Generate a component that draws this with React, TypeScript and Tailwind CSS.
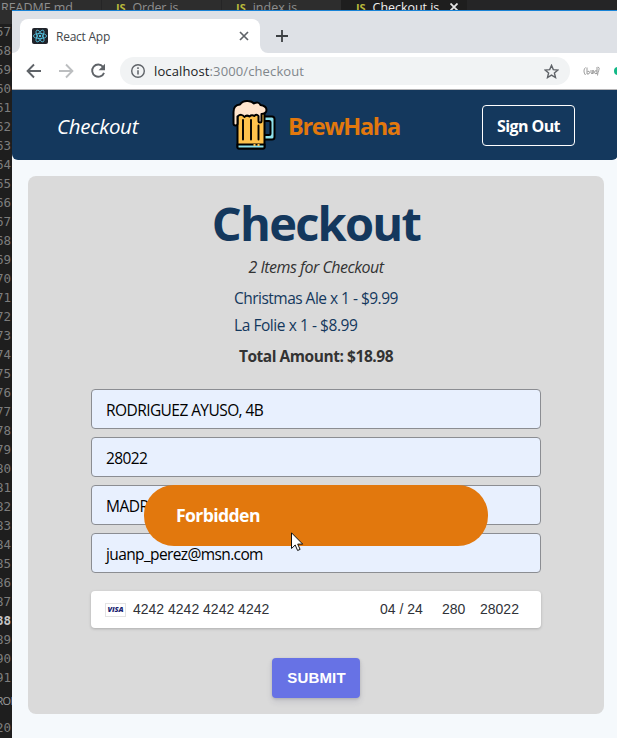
import type { ReactNode } from "react";

const lineNumbers = Array.from({ length: 35 }, (_, i) => 57 + i);

function JsMark() {
  return <span className="mr-[7px] font-['Open_Sans',sans-serif] text-[11px] font-bold text-[#b7b73b]">JS</span>;
}

function EditorTabs() {
  return (
    <div className="flex h-[10px] shrink-0 overflow-hidden bg-[#252526] text-[12.5px] leading-[15px] text-[#8f8f8f]">
      <div className="w-[101px] shrink-0 bg-[#2d2d2d] pl-px whitespace-nowrap tracking-[-0.05px]">README.md</div>
      <div className="w-[120px] shrink-0 border-l border-[#252526] bg-[#2d2d2d] pl-[14px] whitespace-nowrap tracking-[-0.15px]"><JsMark />Order.js</div>
      <div className="w-[120px] shrink-0 border-l border-[#252526] bg-[#2d2d2d] pl-[14px] whitespace-nowrap"><JsMark />index.js</div>
      <div className="flex w-[126px] shrink-0 bg-[#1e1e1e] pl-[15px] whitespace-nowrap text-[#f0f0f0]">
        <div className="w-[94px] tracking-[-0.05px]"><JsMark />Checkout.js</div>
        <svg className="mt-[3px] h-2 w-2" viewBox="0 0 8 8" stroke="#e4e4e4" strokeWidth="1.8"><path d="M.5.5l7 7M7.500.5l-7 7" /></svg>
      </div>
    </div>
  );
}

function Gutter() {
  return (
    <div className="flex w-3 shrink-0 flex-col items-end overflow-hidden border-t-[14px] border-[#2d2d2d] bg-[#1e1e1e] pr-px font-['DejaVu_Sans_Mono',monospace] text-[12.5px] leading-[19px] text-[#7d7d7d]">
      <div className="-mt-[2px]">
        {lineNumbers.map((n) => (
          <div key={n} className={n === 88 ? "font-bold text-[#c6c6c6]" : ""}>{n}</div>
        ))}
      </div>
      <div className="mt-[5px] -mr-[2px] font-['Open_Sans',sans-serif] text-[11px] leading-[18px] tracking-[-0.6px] text-[#9a9a9a]">ROI</div>
      <div className="mt-[8px]">20</div>
    </div>
  );
}

function ReactMark() {
  return (
    <svg className="h-4 w-4 rounded-[2px] bg-[#20232a]" viewBox="0 0 16 16" fill="none" stroke="#53c1de" strokeWidth=".85">
      <ellipse cx="8" cy="8" rx="6.6" ry="2.600" />
      <ellipse cx="8" cy="8" rx="6.600" ry="2.6" transform="rotate(60 8 8)" />
      <ellipse cx="8" cy="8" rx="6.6" ry="2.6" transform="rotate(120 8 8)" />
      <circle cx="8" cy="8" r="1.2" fill="#53c1de" stroke="none" />
    </svg>
  );
}

function TabStrip() {
  return (
    <div className="flex h-[42px] shrink-0 items-end bg-[#dee1e6]">
      <svg className="h-2 w-2" viewBox="0 0 8 8"><path d="M8 0v8H0a8 8 0 0 0 8-8z" fill="#fff" /></svg>
      <div className="flex h-[34px] w-[240px] items-center rounded-t-lg bg-white pr-[11px] pl-3 text-[12px] text-[#45494d]">
        <ReactMark />
        <span className="ml-2 flex-1 pt-px tracking-[-0.25px]">React App</span>
        <svg className="h-[10px] w-[10px]" viewBox="0 0 10 10" stroke="#5f6368" strokeWidth="1.7"><path d="M1 1l8 8M9 1l-8 8" /></svg>
      </div>
      <svg className="h-2 w-2" viewBox="0 0 8 8"><path d="M0 0v8h8a8 8 0 0 1-8-8z" fill="#fff" /></svg>
      <svg className="mb-[11px] ml-2 h-3 w-3" viewBox="0 0 12 12" stroke="#3c4043" strokeWidth="1.8"><path d="M6 0v12M0 6h12" /></svg>
    </div>
  );
}

function Toolbar() {
  return (
    <div className="flex h-[37px] shrink-0 items-center border-b border-[#b5b4b6] bg-white">
      <svg className="ml-[14px] h-4 w-4 shrink-0" viewBox="0 0 16 16" fill="none" stroke="#5f6368" strokeWidth="1.9"><path d="M15 8H2.200M8 1.500L1.600 8 8 14.500" /></svg>
      <svg className="ml-4 h-4 w-4 shrink-0" viewBox="0 0 16 16" fill="none" stroke="#bcbec0" strokeWidth="1.9"><path d="M1 8h12.800M8 1.500L14.400 8 8 14.500" /></svg>
      <svg className="ml-4 h-4 w-4 shrink-0" viewBox="0 0 16 16"><path d="M13 3.800A6.100 6.100 0 1 0 14 9.800" fill="none" stroke="#5f6368" strokeWidth="1.9" /><path d="M15 .8v6.400H8.600z" fill="#5f6368" /></svg>
      <div className="ml-[14px] flex h-7 w-[450px] shrink-0 items-center rounded-full bg-[#f1f3f4] pr-[11px] pl-[11px]">
        <svg className="h-[14px] w-[14px]" viewBox="0 0 14 14"><circle cx="7" cy="7" r="6.300" fill="none" stroke="#5f6368" strokeWidth="1.400" /><path d="M7 6.200v4.400M7 3.300v1.600" stroke="#5f6368" strokeWidth="1.500" /></svg>
        <span className="ml-[9px] flex-1 pt-px text-[13px] tracking-[0.12px] text-[#80868b]"><span className="text-[#202124]">localhost</span>:3000/checkout</span>
        <svg className="h-[15px] w-[15px]" viewBox="0 0 15 15" fill="none" stroke="#5f6368" strokeWidth="1.400"><path d="M7.500 1.400l1.800 4.200 4.600.4-3.500 3 1.100 4.500-4-2.400-4 2.400 1.100-4.500-3.500-3 4.600-.4z" /></svg>
      </div>
      <svg className="ml-[13px] h-[10px] w-[17px] shrink-0" viewBox="0 0 17 10" fill="none" stroke="#8f8f8f" strokeWidth=".9">
        <path d="M2.500 1.500C.5 3.500.5 6.500 2.500 9M4 1.500V8q2.500.5 2.500-1.500T4.500 5.500M8 4v3q1 1.500 2 0V4v4M14 1v6.500M14 5q-2.500-1-2.500 1.200T14 7.500M15 .8q2 1 .8 3.500T14.500 9.500" />
      </svg>
      <div className="ml-[14px] h-2 w-2 shrink-0 rounded-full bg-[#12b886]" />
    </div>
  );
}

function BeerMug() {
  return (
    <svg className="h-[52px] w-[44px]" viewBox="0 0 44 52" stroke="#000" strokeWidth="2" strokeLinejoin="round" strokeLinecap="round">
      <path d="M32 17.500h8q2.500 0 2.500 2.500v18q0 2.500-2.500 2.500h-8v-4.500h5q1.500 0 1.500-1.500v-11q0-1.500-1.500-1.500h-5z" fill="#8ce0eb" />
      <path d="M5.500 12h27v36q0 1.500-1.500 1.500h-24Q5.500 49.500 5.500 48z" fill="#ffc24c" />
      <path d="M5.500 45.500h27v2.500q0 1.500-1.500 1.500H7Q5.500 49.500 5.500 48z" fill="#8ce0eb" />
      <path d="M5.500 24.500q0 2-2 2t-2-2v-11.500Q1.500 6 8 5.500 10.500 1.500 16 2q4 .2 6 2.500Q26.500 2 28.500 6q6 1 6 5 0 3.500-5 4v7q0 1.500-1.500 1.500T26.500 22v-5q-2-2.500-4 0-3-1.500-5 .5-3-2-5 .5-3-4-7-.5z" fill="#ffe4cc" />
      <path d="M11 21v19.500M19 21v19.500M26.500 26.500v14" fill="none" strokeWidth="1.900" />
      <path d="M22.500 45v2M26.500 45v2" stroke="#ffc24c" strokeLinecap="butt" />
    </svg>
  );
}

function Header() {
  return (
    <header className="flex h-[70px] w-[606px] shrink-0 items-center rounded-b-[6px] bg-[#14385d]">
      <div className="mt-[3px] ml-[45px] w-[175px] text-[20.5px] tracking-[-0.3px] text-white italic">Checkout</div>
      <BeerMug />
      <div className="mt-[3px] ml-3 w-[194px] text-[23.5px] font-bold tracking-[-1.3px] text-[#e2780d]">BrewHaha</div>
      <button className="h-[41px] w-[93px] shrink-0 rounded-[4px] border border-white pt-px text-[16px] font-bold tracking-[-0.6px] text-white">Sign Out</button>
    </header>
  );
}

function Field({ children }: { children: ReactNode }) {
  return <div className="flex h-10 items-center rounded-[4px] border border-[#8b8d92] bg-[#e8f0fe] pt-[3px] pl-[14px] text-[15.5px] text-black">{children}</div>;
}

function Toast() {
  return (
    <div className="absolute top-[485px] left-[144px] flex h-[61px] w-[344px] items-center rounded-[30px] bg-[#e2780d] pl-8 text-[17.6px] font-bold tracking-[-0.6px] text-white">
      Forbidden
    </div>
  );
}

function Pointer() {
  return (
    <svg className="absolute top-[532px] left-[291px] h-[20px] w-[13px]" viewBox="0 0 13 20">
      <path d="M.5.8v15.700l3.700-3.500 2.400 5.500 2.500-1.100-2.400-5.300h5z" fill="#fff" stroke="#111" strokeWidth="1" />
    </svg>
  );
}

function CheckoutCard() {
  return (
    <main className="mt-4 ml-4 flex h-[538px] w-[576px] shrink-0 flex-col items-center rounded-lg bg-[#dadada]">
      <h1 className="mt-[15px] text-[47px] leading-[64px] font-bold tracking-[-1.75px] text-[#14385d]">Checkout</h1>
      <p className="mt-[2px] text-[16px] leading-[21px] tracking-[-0.5px] text-[#333] italic">2 Items for Checkout</p>
      <div className="mt-[7px] w-[164px] text-[15.5px] leading-[27px] whitespace-nowrap text-[#14385d]">
        <p className="tracking-[-0.52px]">Christmas Ale x 1 - $9.99</p>
        <p className="tracking-[-0.44px]">La Folie x 1 - $8.99</p>
      </div>
      <p className="mt-[7px] text-[15.5px] leading-[21px] font-bold tracking-[-0.45px] text-[#333]">Total Amount: $18.98</p>
      <div className="mt-[22px] flex w-[450px] flex-col gap-2">
        <Field><span className="tracking-[-0.57px]">RODRIGUEZ AYUSO, 4B</span></Field>
        <Field><span className="tracking-[-0.6px]">28022</span></Field>
        <Field><span className="tracking-[-0.5px]">MADRID</span></Field>
        <Field><span className="tracking-[-0.62px]">juanp_perez@msn.com</span></Field>
      </div>
      <div className="mt-[18px] flex h-[37px] w-[450px] items-center rounded-[4px] bg-white pl-[14px] font-['Liberation_Sans',Arial,sans-serif] text-[14px] text-[#303238] shadow-[0_1px_3px_#00000035]">
        <div className="flex h-[14px] w-[21px] items-center justify-center border border-[#e3e3e3] font-['Open_Sans',sans-serif] text-[7.5px] font-extrabold tracking-[-0.1px] text-[#1a1f71] italic">VISA</div>
        <span className="ml-[7px] w-[247px]">4242 4242 4242 4242</span>
        <span className="w-[62px]">04 / 24</span>
        <span className="w-[38px]">280</span>
        <span>28022</span>
      </div>
      <button className="mt-[30px] h-10 w-[88px] rounded-[4px] bg-[#6772e5] pl-px font-['Liberation_Sans',Arial,sans-serif] text-[15px] font-bold tracking-[0.15px] text-white shadow-[0_4px_6px_rgba(50,50,93,.11),0_1px_3px_rgba(0,0,0,.15)]">SUBMIT</button>
    </main>
  );
}

export default function App() {
  return (
    <div className="relative flex h-[738px] w-[617px] flex-col overflow-hidden bg-[#1e1e1e] font-['Open_Sans','Noto_Sans',sans-serif]">
      <EditorTabs />
      <div className="flex min-h-0 flex-1">
        <Gutter />
        <div className="flex min-w-0 flex-1 flex-col overflow-hidden border-t border-[#1883d7] bg-[#f5f9fc]">
          <TabStrip />
          <Toolbar />
          <Header />
          <CheckoutCard />
        </div>
      </div>
      <Toast />
      <Pointer />
    </div>
  );
}
